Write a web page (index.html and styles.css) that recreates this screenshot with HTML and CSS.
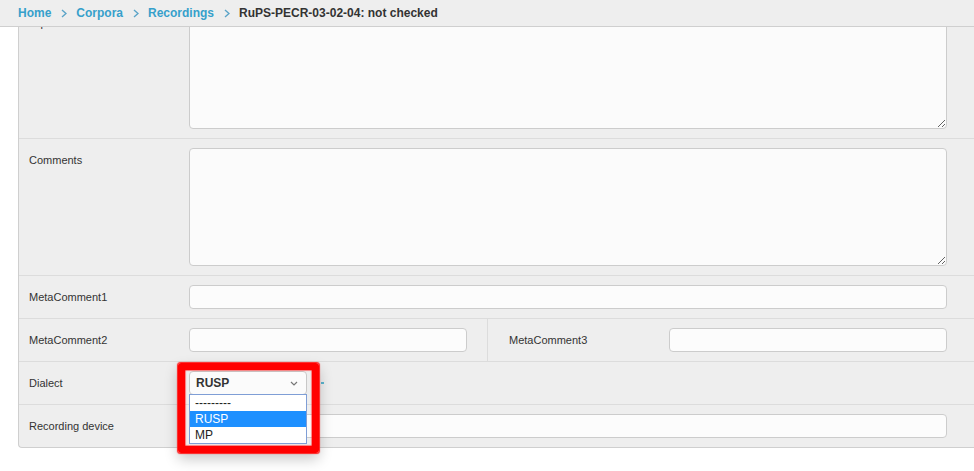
FILE: index.html
```html
<!DOCTYPE html>
<html lang="en">
<head>
<meta charset="utf-8">
<title>RuPS-PECR-03-02-04</title>
<link rel="stylesheet" href="styles.css">
</head>
<body>
<header class="crumbs">
  <a class="crumb" href="#">Home</a>
  <svg class="chev" width="6" height="9" viewBox="0 0 6 9"><path d="M1 1 L5 4.5 L1 8" fill="none" stroke="#5ba4c8" stroke-width="1.4"/></svg>
  <a class="crumb" href="#">Corpora</a>
  <svg class="chev" width="6" height="9" viewBox="0 0 6 9"><path d="M1 1 L5 4.5 L1 8" fill="none" stroke="#5ba4c8" stroke-width="1.4"/></svg>
  <a class="crumb" href="#">Recordings</a>
  <svg class="chev" width="6" height="9" viewBox="0 0 6 9"><path d="M1 1 L5 4.5 L1 8" fill="none" stroke="#5ba4c8" stroke-width="1.4"/></svg>
  <span class="current">RuPS-PECR-03-02-04: not checked</span>
</header>
<main class="page">
  <div class="fieldset">
    <div class="row">
      <label class="lbl">Topics</label>
      <textarea class="ta"></textarea>
    </div>
    <div class="row">
      <label class="lbl">Comments</label>
      <textarea class="ta"></textarea>
    </div>
    <div class="row">
      <label class="lbl">MetaComment1</label>
      <input class="inp" type="text">
    </div>
    <div class="row split">
      <div class="half half-a">
        <label class="lbl">MetaComment2</label>
        <input class="inp inp-half" type="text">
      </div>
      <div class="half half-b">
        <label class="lbl">MetaComment3</label>
        <input class="inp inp-half" type="text">
      </div>
    </div>
    <div class="row">
      <label class="lbl">Dialect</label>
      <div class="selwrap">
        <div class="sel">
          <span>RUSP</span>
          <svg width="8" height="5" viewBox="0 0 8 5"><path d="M1 1 L4 4 L7 1" fill="none" stroke="#777" stroke-width="1.2"/></svg>
        </div>
        <div class="droplist">
          <div class="opt">---------</div>
          <div class="opt opt-on">RUSP</div>
          <div class="opt">MP</div>
        </div>
        <div class="redbox"></div>
      </div>
      <span class="addmark"></span>
    </div>
    <div class="row">
      <label class="lbl">Recording device</label>
      <input class="inp" type="text">
    </div>
  </div>
</main>
</body>
</html>
```
FILE: styles.css
```css
html {
  overflow: hidden;
}

body {
  margin: 0;
  padding: 0;
  background: #fff;
  font-family: "Liberation Sans", Arial, sans-serif;
  min-height: 471px;
}

.crumbs {
  position: fixed;
  top: 0;
  left: 0;
  right: 0;
  height: 26px;
  z-index: 10;
  background: #eeeeee;
  border-bottom: 1px solid #cfcfcf;
  display: flex;
  align-items: center;
  padding-left: 18px;
  font-size: 12px;
  font-weight: bold;
}

.crumb {
  color: #36a0cb;
  text-decoration: none;
}

.chev {
  margin: 0 9px 0 10px;
  flex: none;
}

.current {
  color: #333;
}

.page {
  padding: 1px 0 0 18px;
}

.fieldset {
  border-left: 1px solid #cfcfcf;
  border-bottom: 1px solid #cfcfcf;
  border-top: 1px solid #cfcfcf;
  border-bottom-left-radius: 4px;
  background: #eeeeee;
}

.row {
  display: flex;
  align-items: flex-start;
  padding: 9px 27px 9px 10px;
  border-bottom: 1px solid #dcdcdc;
}

.row:last-child {
  border-bottom: none;
}

.lbl {
  width: 160px;
  flex: none;
  line-height: 24px;
  font-size: 11px;
  color: #333;
}

.ta {
  flex: 1;
  height: 118px;
  box-sizing: border-box;
  margin: 0;
  border: 1px solid #cccccc;
  border-radius: 4px;
  background: #fbfbfb;
  resize: vertical;
  font-family: inherit;
}

.inp {
  flex: 1;
  height: 24px;
  box-sizing: border-box;
  margin: 0;
  border: 1px solid #cccccc;
  border-radius: 4px;
  background: #fcfcfc;
  font-family: inherit;
  min-width: 0;
}

.inp-half {
  flex: none;
  width: 278px;
}

.split {
  padding: 0;
}

.half {
  display: flex;
  align-items: flex-start;
}

.half-a {
  width: 469px;
  box-sizing: border-box;
  padding: 9px 20px 9px 10px;
  border-right: 1px solid #dcdcdc;
}

.half-b {
  flex: 1;
  padding: 9px 27px 9px 21px;
}

.selwrap {
  position: relative;
  width: 118px;
  height: 24px;
  flex: none;
}

.sel {
  box-sizing: border-box;
  width: 118px;
  height: 24px;
  border: 1px solid #c8c8c8;
  border-radius: 4px;
  background: #fbfbfb;
  display: flex;
  align-items: center;
  justify-content: space-between;
  padding: 0 8px 0 6px;
  font-size: 12px;
  font-weight: bold;
  color: #333;
}

.droplist {
  position: absolute;
  left: 0;
  top: 23px;
  width: 118px;
  box-sizing: border-box;
  border: 1px solid #7f9ed6;
  background: #fff;
  z-index: 5;
}

.opt {
  height: 16px;
  line-height: 16px;
  font-size: 12px;
  color: #222;
  padding-left: 5px;
}

.opt-on {
  background: #1e90ff;
  color: #fff;
}

.redbox {
  position: absolute;
  left: -11px;
  top: -8px;
  width: 141px;
  height: 90px;
  box-sizing: border-box;
  border: 7px solid #ff0000;
  border-radius: 3px;
  box-shadow: 0 0 1px 0.5px #ff2020, inset 0 0 1px 0.5px #ff2020, 0 6px 14px rgba(0, 0, 0, 0.22);
  z-index: 6;
}

.addmark {
  display: inline-block;
  width: 3px;
  height: 2px;
  background: #5bb5cf;
  margin: 11px 0 0 14px;
  flex: none;
}
```
